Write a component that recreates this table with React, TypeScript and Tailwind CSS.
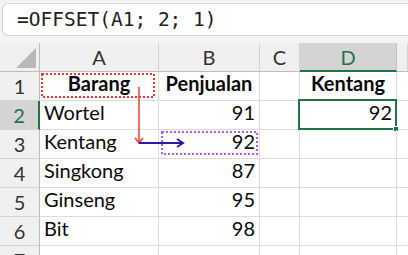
import React from "react";

const COLS = ["A", "B", "C", "D", ""];
const ROWS: { n: number; a: string; b: string; d: string; bold?: boolean }[] = [
  { n: 1, a: "Barang", b: "Penjualan", d: "Kentang", bold: true },
  { n: 2, a: "Wortel", b: "91", d: "92" },
  { n: 3, a: "Kentang", b: "92", d: "" },
  { n: 4, a: "Singkong", b: "87", d: "" },
  { n: 5, a: "Ginseng", b: "95", d: "" },
  { n: 6, a: "Bit", b: "98", d: "" },
  { n: 7, a: "", b: "", d: "" },
];

const font = { fontFamily: "Lato, 'Noto Sans', sans-serif" };

export default function App() {
  return (
    <div className="w-[408px] h-[255px] overflow-hidden bg-white text-[#0a0a0a]" style={font}>
      {/* formula bar */}
      <div className="h-[43px] bg-[#f3f3f3] pt-[3px] pl-[2px]">
        <div
          className="h-[33px] bg-white border border-[#d6d6d6] border-r-0 rounded-l-md flex items-center pl-[14px] text-[19.5px] text-[#222]"
          style={{ fontFamily: "'DejaVu Sans Mono', monospace" }}
        >
          =OFFSET(A1; 2; 1)
        </div>
      </div>

      {/* sheet */}
      <div className="relative grid grid-cols-[40px_119px_101px_40px_97px_1fr] auto-rows-[29px]">
        {/* header row */}
        <div className="relative bg-[#f0f0f0] border-r border-b border-[#bdbdbd]">
          <svg className="absolute right-[3px] bottom-[3px]" width="20" height="20" viewBox="0 0 20 20">
            <polygon points="20,0 20,20 0,20" fill="#b9b9b9" />
          </svg>
        </div>
        {COLS.map((c) => (
          <div
            key={c || "E"}
            className={`flex items-center justify-center text-[20px] border-r ${
              c === "D"
                ? "bg-[#d4d4d4] text-[#217346] border-b-2 border-b-[#217346] border-r-[#c4c4c4]"
                : "bg-[#f0f0f0] text-[#333] border-b border-[#bdbdbd] border-r-[#d4d4d4]"
            }`}
          >
            {c}
          </div>
        ))}

        {ROWS.map((r) => (
          <React.Fragment key={r.n}>
            <div
              className={`flex items-center justify-center text-[20px] border-b border-b-[#d4d4d4] ${
                r.n === 2
                  ? "bg-[#d4d4d4] text-[#217346] border-r-2 border-r-[#217346]"
                  : "bg-[#f0f0f0] text-[#333] border-r border-r-[#bdbdbd]"
              }`}
            >
              {r.n}
            </div>
            <div
              className={`flex items-end pb-[2px] text-[20px] border-r border-b border-[#dcdcdc] ${
                r.bold ? "justify-center font-bold" : "pl-[4px]"
              }`}
            >
              {r.a}
            </div>
            <div
              className={`flex items-end pb-[2px] text-[20px] border-r border-b border-[#dcdcdc] ${
                r.bold ? "justify-center font-bold" : "justify-end pr-[4px]"
              }`}
            >
              {r.b}
            </div>
            <div className="border-r border-b border-[#dcdcdc]" />
            <div
              className={`relative flex items-end pb-[2px] text-[20px] border-r border-b border-[#dcdcdc] ${
                r.bold ? "justify-center font-bold" : "justify-end pr-[4px]"
              }`}
            >
              {r.d}
              {r.n === 2 && (
                <div className="absolute -left-[2px] -top-[2px] w-[99px] h-[31px] border-2 border-[#217346]">
                  <div className="absolute -right-[4px] -bottom-[4px] w-[6px] h-[6px] bg-[#217346] border border-white" />
                </div>
              )}
            </div>
            <div className="border-b border-[#dcdcdc]" />
          </React.Fragment>
        ))}

        {/* reference overlays */}
        <svg className="absolute left-0 top-0 pointer-events-none" width="408" height="212">
          <rect x="42" y="31" width="112" height="23" fill="none" stroke="#e03a3a" strokeWidth="2" strokeDasharray="2 2" />
          <rect x="162" y="89" width="95" height="22" fill="none" stroke="#b25ce0" strokeWidth="2" strokeDasharray="2 2" />
          <line x1="139" y1="44" x2="139" y2="100" stroke="#ee3b3b" strokeWidth="1.5" />
          <polyline points="135,95 139,100 143,95" fill="none" stroke="#ee3b3b" strokeWidth="1.5" />
          <line x1="139" y1="100" x2="183" y2="100" stroke="#2a1a9e" strokeWidth="2" />
          <polyline points="177,96 183,100 177,104" fill="none" stroke="#2a1a9e" strokeWidth="2" />
        </svg>
      </div>
    </div>
  );
}
